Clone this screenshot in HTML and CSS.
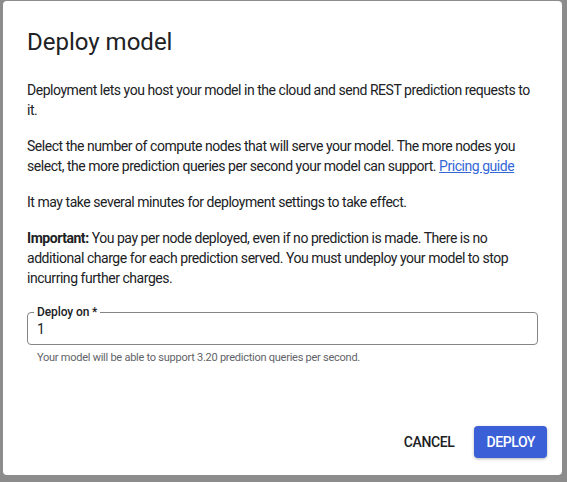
FILE: index.html
```html
<!DOCTYPE html>
<html>
<head>
<meta charset="utf-8">
<link rel="stylesheet" href="styles.css">
</head>
<body>
<div class="dialog">
  <div class="content">
    <h1 class="title">Deploy model</h1>
    <p class="para">Deployment lets you host your model in the cloud and send REST prediction requests to it.</p>
    <p class="para">Select the number of compute nodes that will serve your model. The more nodes you select, the more prediction queries per second your model can support. <a class="link" href="#">Pricing guide</a></p>
    <p class="para">It may take several minutes for deployment settings to take effect.</p>
    <p class="para"><b>Important:</b> You pay per node deployed, even if no prediction is made. There is no additional charge for each prediction served. You must undeploy your model to stop incurring further charges.</p>
    <div class="field">
      <fieldset class="outline">
        <legend class="legend">Deploy on *</legend>
        <div class="value">1</div>
      </fieldset>
      <div class="hint">Your model will be able to support 3.20 prediction queries per second.</div>
    </div>
  </div>
  <div class="actions">
    <button class="btn btn-text">CANCEL</button>
    <button class="btn btn-primary">DEPLOY</button>
  </div>
</div>
</body>
</html>
```
FILE: styles.css
```css
html, body {
  margin: 0;
  padding: 0;
  background: #8c8c8c;
  font-family: Roboto, "Liberation Sans", sans-serif;
}
body {
  padding: 1px 0 0 3px;
}
.dialog {
  width: 559px;
  height: 474px;
  box-sizing: border-box;
  background: #fff;
  border-radius: 4px;
  display: flex;
  flex-direction: column;
  justify-content: space-between;
}
.content {
  padding: 25px 24px 0 24px;
}
.title {
  margin: 0 0 22px 0;
  font-size: 24px;
  line-height: 32px;
  font-weight: 400;
  color: #202124;
}
.para {
  margin: 0 0 16px 0;
  font-size: 14px;
  line-height: 20px;
  letter-spacing: -0.46px;
  color: #202124;
}
.link {
  color: #3367d6;
  text-decoration: underline;
}
.field {
  margin-top: 17px;
}
.outline {
  margin: 0;
  padding: 0 12px 0 6px;
  border: 1px solid #858585;
  border-radius: 4px;
  height: 40px;
  box-sizing: border-box;
}
.legend {
  font-size: 12px;
  font-weight: 500;
  color: #202124;
  padding: 0 3px;
  line-height: 14px;
  letter-spacing: -0.1px;
}
.value {
  font-size: 14px;
  color: #202124;
  line-height: 20px;
  padding-left: 3px;
}
.hint {
  font-size: 11px;
  line-height: 16px;
  letter-spacing: -0.25px;
  color: #5f6368;
  padding: 5px 0 0 10px;
}
.actions {
  display: flex;
  justify-content: flex-end;
  align-items: center;
  gap: 8px;
  padding: 0 15px 17px 0;
}
.btn {
  font-family: Roboto, "Liberation Sans", sans-serif;
  font-size: 14px;
  font-weight: 500;
  letter-spacing: -0.4px;
  border: none;
  border-radius: 4px;
  height: 32px;
  padding: 0 12px;
  cursor: pointer;
}
.btn-text {
  background: transparent;
  color: #202124;
}
.btn-primary {
  background: #3b5fd7;
  color: #fff;
  box-shadow: 0 1px 3px rgba(0,0,0,0.3);
}
```
